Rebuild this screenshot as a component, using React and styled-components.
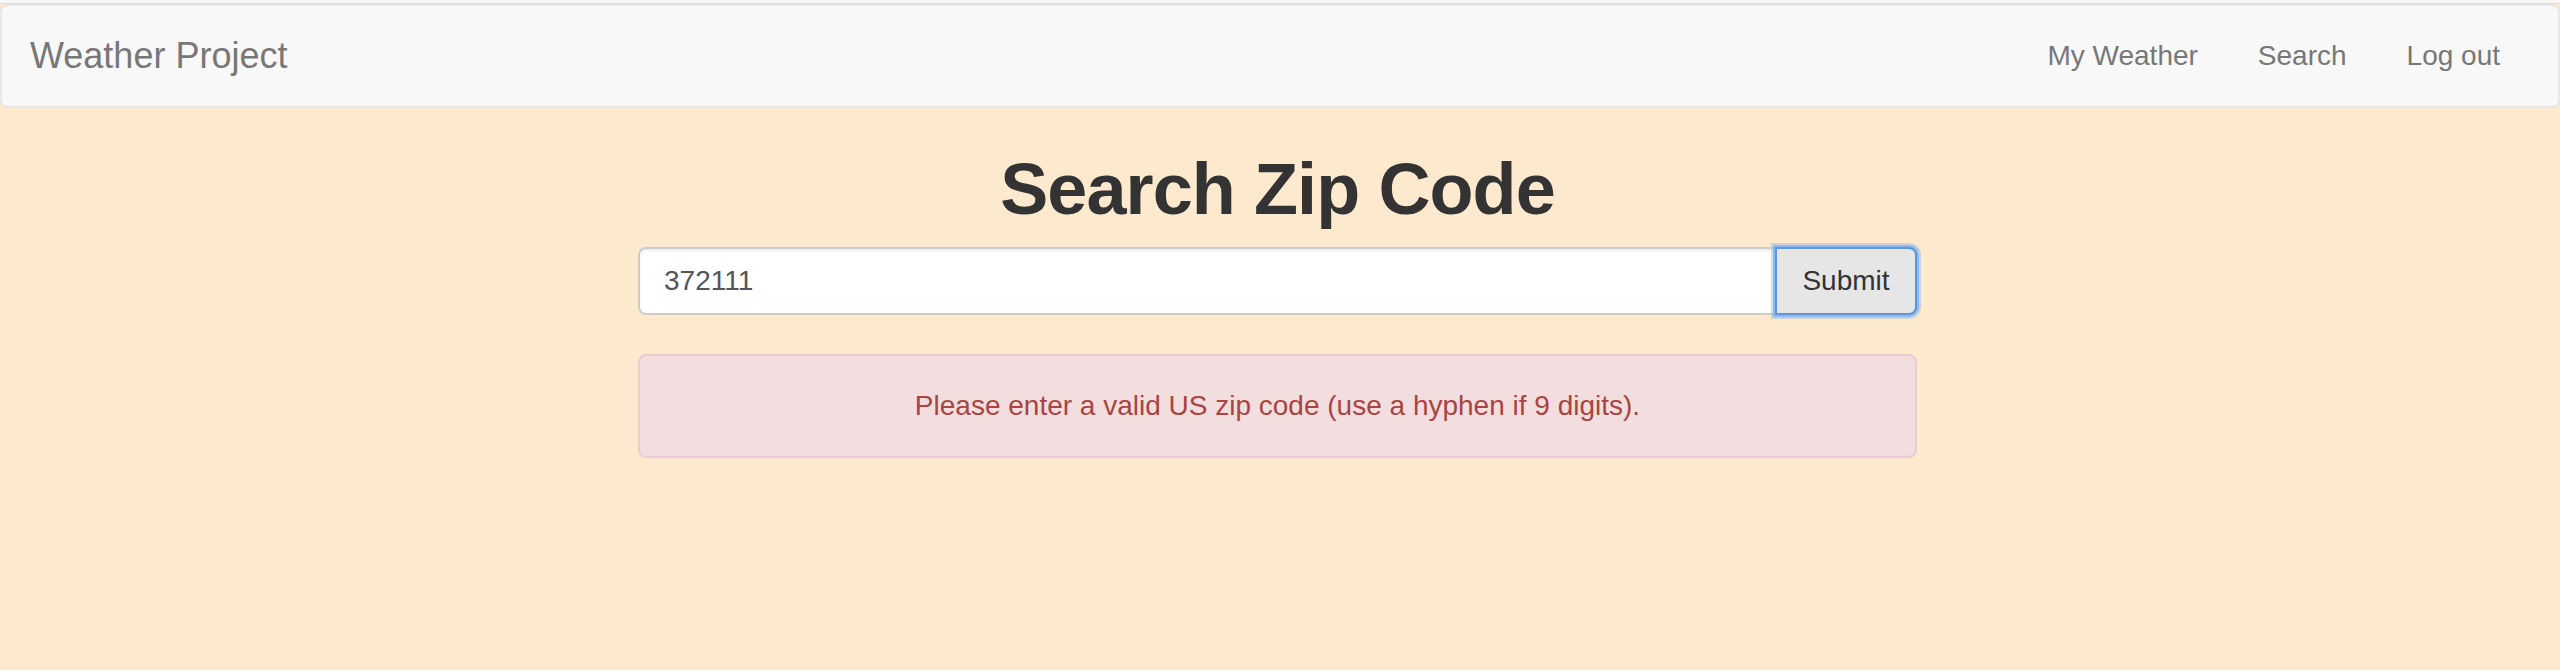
import React, { useState } from "react";
import styled, { createGlobalStyle } from "styled-components";

const GlobalStyle = createGlobalStyle`
  html, body {
    margin: 0;
    padding: 0;
    background: #fde9cd;
    min-height: 100%;
  }
  body {
    font-family: "Liberation Sans", Arial, sans-serif;
    color: #333;
  }
  * {
    box-sizing: border-box;
  }
`;

const Page = styled.div`
  min-height: 100vh;
  background: #fde9cd;
`;

const TopStrip = styled.div`
  height: 4px;
  background: #f7f7f7;
  border-top: 2px solid #f7f7f7;
  border-bottom: 1px solid #d8d8d8;
`;

const Navbar = styled.nav`
  display: flex;
  align-items: center;
  justify-content: space-between;
  height: 104px;
  padding: 0 28px;
  background: #f8f8f8;
  border: 2px solid #e7e7e7;
  border-radius: 8px;
`;

const Brand = styled.a`
  font-size: 36px;
  line-height: 40px;
  color: #777;
  text-decoration: none;
  padding: 30px 0;
`;

const NavList = styled.ul`
  display: flex;
  list-style: none;
  margin: 0;
  padding: 0;
`;

const NavLink = styled.a`
  display: block;
  padding: 30px 30px;
  font-size: 28px;
  line-height: 40px;
  color: #777;
  text-decoration: none;
  &:last-child {
    padding-right: 30px;
  }
`;

const Main = styled.main`
  width: 1279px;
  margin-left: calc(50% - 642px);
`;

const Title = styled.h1`
  margin: 42px 0 18px;
  text-align: center;
  font-size: 72px;
  line-height: 79px;
  font-weight: 700;
  letter-spacing: -0.9px;
  color: #333;
`;

const SearchForm = styled.form`
  display: flex;
  height: 68px;
`;

const ZipInput = styled.input`
  flex: 1;
  height: 68px;
  padding: 0 24px;
  font-family: "Liberation Sans", Arial, sans-serif;
  font-size: 28px;
  color: #555;
  background: #fff;
  border: 2px solid #ccc;
  border-right: none;
  border-radius: 8px 0 0 8px;
  box-shadow: inset 0 2px 2px rgba(0, 0, 0, 0.075);
  outline: none;
`;

const SubmitButton = styled.button`
  width: 142px;
  height: 68px;
  padding: 0 24px;
  font-family: "Liberation Sans", Arial, sans-serif;
  font-size: 28px;
  color: #333;
  background: #e6e6e6;
  border: 2px solid #5e97dc;
  border-radius: 0 8px 8px 0;
  box-shadow: 0 0 0 2px #8db8ec, 0 0 0 4px rgba(140, 185, 236, 0.45);
  cursor: pointer;
`;

const Alert = styled.div`
  margin-top: 39px;
  padding: 30px;
  font-size: 28px;
  line-height: 40px;
  text-align: center;
  color: #a94442;
  background: #f2dede;
  border: 2px solid #ebccd1;
  border-radius: 8px;
`;

const links = ["My Weather", "Search", "Log out"];

const App = () => {
  const [zip, setZip] = useState("372111");

  return (
    <>
      <GlobalStyle />
      <Page>
        <TopStrip />
        <Navbar>
          <Brand href="#">Weather Project</Brand>
          <NavList>
            {links.map((label) => (
              <li key={label}>
                <NavLink href="#">{label}</NavLink>
              </li>
            ))}
          </NavList>
        </Navbar>
        <Main>
          <Title>Search Zip Code</Title>
          <SearchForm onSubmit={(e) => e.preventDefault()}>
            <ZipInput value={zip} onChange={(e) => setZip(e.target.value)} />
            <SubmitButton type="submit">Submit</SubmitButton>
          </SearchForm>
          <Alert>Please enter a valid US zip code (use a hyphen if 9 digits).</Alert>
        </Main>
      </Page>
    </>
  );
};

export default App;
